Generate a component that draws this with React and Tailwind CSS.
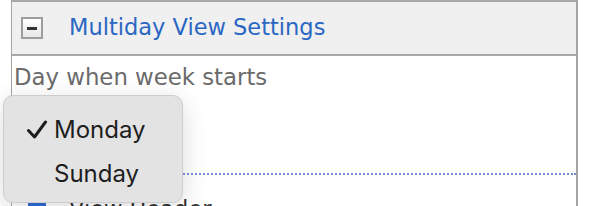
import React from 'react';

const font = { fontFamily: '"DejaVu Sans", Verdana, sans-serif' };

const WeekStartMenu = () => (
    <div
        className="absolute left-[3px] top-[95px] w-[180px] h-[108px] rounded-[10px] border border-[#cdcdcd] bg-[#e3e3e3] shadow-[0_6px_26px_rgba(0,0,0,0.14)] pt-[12px]"
        style={{ fontFamily: 'Inter, "Liberation Sans", sans-serif' }}
    >
        <div className="relative flex items-center h-[44px] pl-[50px] text-[24px] text-[#1e1e1e]">
            <svg className="absolute left-[22px] top-[12px]" width="22" height="20" viewBox="0 0 22 20">
                <path d="M2.5 10.5 L8.5 17 L19.5 2" fill="none" stroke="#1e1e1e" strokeWidth="3" strokeLinecap="round" strokeLinejoin="round" />
            </svg>
            Monday
        </div>
        <div className="flex items-center h-[44px] pl-[50px] text-[24px] text-[#1e1e1e]">Sunday</div>
    </div>
);

export default function App() {
    return (
        <div className="relative w-[592px] h-[206px] overflow-hidden bg-white" style={font}>
            <div className="ml-[11px] w-[567px] h-[240px] border-l border-r-2 border-[#a3a3a3]">
                <div className="flex items-center h-[56px] bg-[#f0f0f0] border-t-2 border-b-2 border-[#a8a8a8]">
                    <div className="ml-[9px] w-[22px] h-[22px] border-2 border-[#9d9d9d] bg-gradient-to-b from-white to-[#e8e8e8] flex items-center justify-center">
                        <div className="w-[10px] h-[3px] bg-[#333]" />
                    </div>
                    <span className="ml-[26px] text-[22.5px] text-[#2a67c3]">Multiday View Settings</span>
                </div>
                <div className="mt-[8px] pl-[2px] text-[22.8px] leading-[26px] text-[#6b6b6b]">Day when week starts</div>
                <div className="h-[83px]" />
                <div className="border-t-2 border-dotted border-[#7590d4]" />
                <div className="flex items-start mt-[21px] pl-[16px] gap-[23px]">
                    <div className="mt-[2px] w-[18px] h-[18px] rounded-[3px] bg-[#2f6bd6]" />
                    <span className="text-[22.5px] leading-[26px] text-[#333]">View Header</span>
                </div>
            </div>
            <WeekStartMenu />
        </div>
    );
}
